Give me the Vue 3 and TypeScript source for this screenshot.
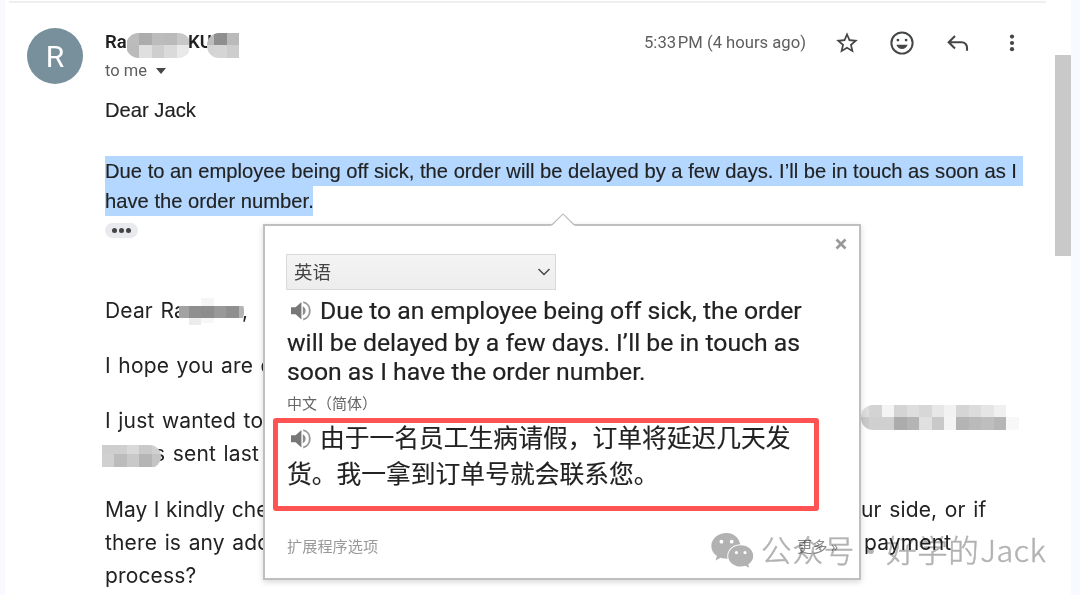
<script setup lang="ts">
interface Cell {
  x: number
  y: number
  w: number
  h: number
  c: string
}

function row(x: number, y: number, w: number, h: number, shades: string[]): Cell[] {
  return shades.map((c, i) => ({ x: x + i * w, y, w, h, c }))
}

const nameMask: Cell[] = [
  ...row(0.5, 0, 12.5, 12, ['#bcbcbc', '#acacac', '#bcbcbc', '#bababa', '#c8c8c8']),
  ...row(0.5, 12, 12.5, 13, ['#bababa', '#dfdfdf', '#cecece', '#dadada', '#e9e9e9']),
]
const surnameMask: Cell[] = [
  ...row(-5.5, 0, 12.5, 12, ['#bcbcbc', '#8f8f8f', '#bababa']),
  ...row(-5.5, 12, 12.5, 13, ['#d3d3d3', '#d5d5d5', '#cdcdcd']),
]
const greetMask: Cell[] = [
  ...row(-3, 8, 12.5, 12, ['#a2a2a2', '#8f8f8f', '#8d8d8d', '#999999', '#8f8f8f', '#b4b4b4']),
  { x: 22, y: 0, w: 12.5, h: 8, c: '#f5f5f5' },
  { x: 9.5, y: 20, w: 12.5, h: 7, c: '#ececec' },
  { x: 22, y: 20, w: 12.5, h: 5, c: '#f7f7f7' },
]
const orderMask: Cell[] = [
  ...row(0, 0, 12.4, 9, ['#cecece', '#cfcfcf', '#d9d9d9', '#c9c9c9', '#d0d0d0']),
  ...row(0, 9, 12.4, 13, ['#d0d0d0', '#bcbcbc', '#c9c9c9', '#b5b5b5', '#c4c4c4']),
]
const longMask: Cell[] = [
  ...row(-4, 0, 12.43, 12.3, ['#dddddd', '#d3d3d3', '#f4f4f4', '#d4d4d4', '#dedede', '#d7d7d7', '#e7e7e7', '#f2f2f2', '#d5d5d5', '#dcdcdc', '#e5e5e5', '#f0f0f0']),
  ...row(-4, 12.3, 12.43, 12.7, ['#c9c9c9', '#d0d0d0', '#d0d0d0', '#acacac', '#b4b4b4', '#e0e0e0', '#c9c9c9', '#f4f4f4', '#b4b4b4', '#bababa', '#bebebe', '#b6b6b6', '#f8f8f8']),
]
</script>

<template>
  <div class="page">
    <main class="mail">
      <header class="head">
        <div class="avatar">R</div>
        <div class="who">
          <div class="name">
            <span>Ra</span>
            <span class="kul">KUL</span>
            <svg class="mask m-name" width="65" height="25" shape-rendering="crispEdges"><rect v-for="(k, i) in nameMask" :key="i" :x="k.x" :y="k.y" :width="k.w" :height="k.h" :fill="k.c" /></svg>
            <svg class="mask m-sur" width="32" height="25" shape-rendering="crispEdges"><rect v-for="(k, i) in surnameMask" :key="i" :x="k.x" :y="k.y" :width="k.w" :height="k.h" :fill="k.c" /></svg>
          </div>
          <div class="to">to me <i class="tri"></i></div>
        </div>
        <div class="tools">
          <span class="time">5:33&#8202;PM (4 hours ago)</span>
          <svg class="t-star" width="26" height="26" viewBox="0 0 24 24"><path fill="#444746" d="M22 9.24l-7.19-.62L12 2 9.19 8.63 2 9.24l5.46 4.73L5.82 21 12 17.27 18.18 21l-1.63-7.03L22 9.24zM12 15.4l-3.76 2.27 1-4.28-3.32-2.88 4.38-.38L12 6.1l1.71 4.04 4.38.38-3.32 2.88 1 4.28L12 15.4z" /></svg>
          <svg class="t-face" width="28" height="28" viewBox="0 0 24 24"><circle cx="12" cy="12" r="9.100" fill="none" stroke="#444746" stroke-width="1.700" /><circle cx="8.500" cy="9.500" r="1.200" fill="#444746" /><circle cx="15.500" cy="9.500" r="1.200" fill="#444746" /><path fill="#444746" d="M7.200 13.600h9.600c-.7 2.200-2.500 3.600-4.800 3.600s-4.100-1.400-4.800-3.600z" /></svg>
          <svg class="t-reply" width="28" height="28" viewBox="0 0 28 28"><path fill="none" stroke="#444746" stroke-width="2.100" d="M11 7 4.700 13.200l6.300 6.200M5.100 13.200h12.600a5.300 5.300 0 0 1 5.300 5.300v3.300" /></svg>
          <svg class="t-more" width="8" height="20" viewBox="0 0 8 20"><circle cx="4" cy="3.600" r="2.100" fill="#444746" /><circle cx="4" cy="10" r="2.100" fill="#444746" /><circle cx="4" cy="16.200" r="2.100" fill="#444746" /></svg>
        </div>
      </header>

      <section class="reply">
        <p class="dear">Dear Jack</p>
        <p class="hl"><span class="l1">Due to an employee being off sick, the order will be delayed by a few days. I’ll be in touch as soon as I</span></p>
        <p class="hl"><span class="l2">have the order number.</span></p>
        <div class="dots"><i></i><i></i><i></i></div>
      </section>

      <section class="quoted">
        <p class="q gap">Dear Ra<svg class="mask m-greet" width="65" height="27" shape-rendering="crispEdges"><rect v-for="(k, i) in greetMask" :key="i" :x="k.x" :y="k.y" :width="k.w" :height="k.h" :fill="k.c" /></svg><span class="comma">,</span></p>
        <p class="q gap">I hope you are d</p>
        <p class="q">I just wanted to</p>
        <p class="q gap"><span class="sent">s sent last</span><svg class="mask m-order" width="59" height="23" shape-rendering="crispEdges"><rect v-for="(k, i) in orderMask" :key="i" :x="k.x" :y="k.y" :width="k.w" :height="k.h" :fill="k.c" /></svg><svg class="mask m-long" width="159" height="25" shape-rendering="crispEdges"><rect v-for="(k, i) in longMask" :key="i" :x="k.x" :y="k.y" :width="k.w" :height="k.h" :fill="k.c" /></svg></p>
        <p class="q split low"><span class="tight">May I kindly che</span><span>ur side, or if</span></p>
        <p class="q split low"><span>there is any add</span><span class="pay">payment</span></p>
        <p class="q low">process?</p>
      </section>
    </main>
    <div class="scrollbar"></div>

    <aside class="popup">
      <svg class="caret" width="24" height="13" viewBox="0 0 24 13"><path d="M0 13 1 12 12 1l11 11 1 1z" fill="#fff" /><path d="M.8 12 12 .9l11.200 11.100" fill="none" stroke="#b8b8b8" stroke-width="1.100" /></svg>
      <svg class="close" width="12" height="12" viewBox="0 0 12 12"><path d="M1.500 1.500l9 9m0-9l-9 9" stroke="#999" stroke-width="2.700" /></svg>
      <div class="select">
        <span>英语</span>
        <svg width="14" height="10" viewBox="0 0 14 10"><path d="M1.500 2 7 7.600 12.500 2" fill="none" stroke="#444" stroke-width="1.400" /></svg>
      </div>
      <div class="en">
        <div class="e e1"><svg class="spk" width="22" height="22" viewBox="0 0 22 22"><path fill="#777" d="M1 7.300v7h4.600l5.800 5.200V2L5.600 7.300z" /><path fill="#8b8b8b" d="M12.800 6.300v9c1.700-.8 2.800-2.400 2.800-4.500s-1.100-3.700-2.800-4.500z" /><path fill="none" stroke="#999" stroke-width="1.900" d="M13.200 2.100c3.800.8 6.600 4.200 6.600 8.700s-2.800 7.900-6.600 8.700" /></svg>Due to an employee being off sick, the order</div>
        <div class="e e2">will be delayed by a few days. I’ll be in touch as</div>
        <div class="e e3">soon as I have the order number.</div>
      </div>
      <div class="lang">中文（简体）</div>
      <div class="zh">
        <div class="z"><svg class="spk" width="22" height="22" viewBox="0 0 22 22"><path fill="#777" d="M1 7.300v7h4.600l5.800 5.200V2L5.600 7.300z" /><path fill="#8b8b8b" d="M12.800 6.300v9c1.700-.8 2.800-2.400 2.800-4.500s-1.100-3.700-2.800-4.500z" /><path fill="none" stroke="#999" stroke-width="1.900" d="M13.200 2.100c3.800.8 6.600 4.200 6.600 8.700s-2.800 7.900-6.600 8.700" /></svg>由于一名员工生病请假，订单将延迟几天发</div>
        <div class="z">货。我一拿到订单号就会联系您。</div>
      </div>
      <div class="foot"><span>扩展程序选项</span><span class="more">更多 »</span></div>
      <div class="redbox"></div>
    </aside>

    <div class="watermark">
      <svg width="43" height="35" viewBox="0 0 43 35"><path fill="#b2b2b2" fill-rule="evenodd" d="M15.500 0C7 0 .3 5.700.3 13c0 4.200 2.200 7.600 5.600 10l-1.300 4.400 5-2.600c2 .6 3.700.9 6 .9h.9C15 18.200 20.500 11.600 29.300 11.300 28 4.700 22.500 0 15.500 0zM10.400 6.800a1.900 1.900 0 1 1 0 3.800 1.900 1.900 0 0 1 0-3.800zm10.300 0a1.900 1.900 0 1 1 0 3.800 1.900 1.900 0 0 1 0-3.800z" /><path fill="#b2b2b2" fill-rule="evenodd" d="M29.700 12.300c-7 0-12.500 4.700-12.500 10.600s5.500 10.600 12.500 10.600c1.700 0 3.100-.2 4.500-.7l4 2-1-3.400c3.100-2 5-5 5-8.500 0-5.900-5.500-10.600-12.500-10.600zM25.400 18a1.600 1.600 0 1 1 0 3.200 1.600 1.600 0 0 1 0-3.200zm8.600 0a1.600 1.600 0 1 1 0 3.200 1.600 1.600 0 0 1 0-3.200z" /></svg>
      <span class="wm-a">公众号</span><span class="wm-dot">·</span><span class="wm-b">好学的</span><span class="wm-c">Jack</span>
    </div>
  </div>
</template>

<style>
body { overflow: hidden; background: #f8faff; }
</style>

<style scoped>
.page {
  position: relative;
  display: flex;
  width: 1080px;
  height: 595px;
  overflow: hidden;
  background: #f8faff;
  color: #222;
  font-family: "Liberation Sans", Arial, sans-serif;
}
p { margin: 0; }
.mail {
  width: 1050px;
  margin-left: 5px;
  box-sizing: border-box;
  padding-left: 22px;
  background: linear-gradient(#efefef, #efefef) 4px 1px / 1037px 2px no-repeat #fff;
}
.scrollbar {
  width: 16px;
  height: 595px;
  background: linear-gradient(#c9c9c9, #c9c9c9) 0 55px / 16px 201px no-repeat #fff;
}
.head { display: flex; height: 93px; }
.avatar {
  width: 56px;
  height: 56px;
  margin-top: 28px;
  border-radius: 50%;
  background: #78909c;
  color: #fff;
  font: 30px/57px Roboto, sans-serif;
  text-align: center;
}
.who { width: 160px; margin-left: 22px; padding-top: 30px; white-space: nowrap; }
.name { position: relative; height: 26px; font: 600 18.500px/25px Roboto, sans-serif; color: #1f1f1f; }
.kul { position: absolute; left: 83px; top: 0; }
.mask { position: absolute; }
.m-name { left: 21px; top: 3px; border-radius: 12.500px; }
.m-sur { left: 102px; top: 3px; border-radius: 12px 0 0 12px; }
.to { display: flex; align-items: center; height: 30px; font: 16.500px/30px Roboto, sans-serif; color: #5e5e5e; }
.tri { margin-left: 9px; border: 5.500px solid transparent; border-top: 6px solid #444746; border-bottom: 0; }
.tools { display: flex; align-items: center; height: 86px; margin-left: 379px; }
.time { width: 190px; height: 21px; font: 16.650px/20px Roboto, sans-serif; color: #5e5e5e; white-space: nowrap; }
.t-face { margin-left: 28px; }
.t-reply { margin-left: 28px; }
.t-more { margin-left: 36px; }
.reply { margin-left: 78px; height: 199px; font-size: 20.200px; line-height: 30px; white-space: nowrap; -webkit-text-stroke: .15px #222; }
.dear { padding-top: 2px; height: 61px; }
.hl { height: 30px; }
.hl span { display: inline-block; height: 30px; background: #b3d7ff; }
.l1 { width: 918px; }
.l2 { width: 208px; }
.dots { display: flex; align-items: center; justify-content: center; gap: 2px; width: 33px; height: 15px; margin-top: 7px; border-radius: 8px; background: #e8eaed; }
.dots i { width: 5px; height: 5px; border-radius: 50%; background: #444; }
.quoted { margin-left: 78px; padding-top: 2px; font: 21px/34px Inter, sans-serif; letter-spacing: .15px; word-spacing: 1.500px; white-space: nowrap; }
.q { position: relative; height: 33px; }
.gap { margin-bottom: 22px; }
.low { line-height: 35px; }
.m-greet { left: 74px; top: 4px; border-radius: 0 12px 12px 0; }
.comma { position: absolute; left: 137px; }
.m-order { left: -3px; top: 8px; border-radius: 0 12px 12px 0; }
.m-long { left: 756px; top: -32px; border-radius: 12px 0 0 12px; }
.sent { margin-left: 49px; }
.split { display: flex; }
.split span:first-child { width: 756px; }
.split .tight { letter-spacing: .05px; word-spacing: .5px; }
.pay { margin-left: 3px; }
.popup {
  position: absolute;
  left: 263px;
  top: 224px;
  width: 598px;
  height: 356px;
  box-sizing: border-box;
  padding: 28px 21px 0 22px;
  border: 2px solid #bfbfbf;
  background: #fff;
  box-shadow: 0 2px 6px rgba(0, 0, 0, .16);
  white-space: nowrap;
}
.caret { position: absolute; left: 286px; top: -13px; }
.close { position: absolute; left: 570px; top: 12px; }
.select {
  display: flex;
  align-items: center;
  justify-content: space-between;
  width: 270px;
  height: 36px;
  margin-left: -1px;
  box-sizing: border-box;
  padding: 0 4px 0 7px;
  border: 1px solid #d9d9d9;
  background: linear-gradient(#f4f4f4, #ededed);
  color: #444;
  font: 18.500px/33px "Noto Sans CJK SC", sans-serif;
}
.select span { height: 34px; }
.en { font: 24.770px/31px Roboto, sans-serif; color: #222; padding-top: 5px; -webkit-text-stroke: .2px #222; }
.e { height: 31px; }
.e2 { line-height: 33px; }
.e3 { height: 30px; line-height: 30px; }
.e1, .z:first-child { display: flex; align-items: center; }
.spk { margin: 0 8px 0 3px; }
.lang { height: 31px; font: 15px/32px "Noto Sans CJK SC", sans-serif; color: #666; }
.zh { font: 24.770px/36px "Noto Sans CJK SC", sans-serif; color: #222; -webkit-text-stroke: .15px #222; }
.zh .spk { margin-top: 5px; }
.z { height: 36px; }
.foot { display: flex; justify-content: space-between; padding-top: 44px; font: 15.200px/22px "Noto Sans CJK SC", sans-serif; color: #999; }
.more { color: #888; }
.redbox { position: absolute; left: 8px; top: 192px; width: 546px; height: 93px; box-sizing: border-box; border: 5px solid #ff5252; border-radius: 3px; }
.watermark {
  position: absolute;
  left: 711px;
  top: 533px;
  display: flex;
  height: 36px;
  color: #b2b2b2;
  font: 300 30.500px/32px "Noto Sans CJK SC", sans-serif;
  -webkit-text-stroke: .5px #b2b2b2;
  white-space: nowrap;
  mix-blend-mode: multiply;
}
.wm-a { margin-left: 7px; letter-spacing: .9px; }
.wm-dot { width: 31px; text-align: center; }
.wm-b { letter-spacing: .5px; }
.wm-c { margin-left: 1px; letter-spacing: .6px; }
</style>
